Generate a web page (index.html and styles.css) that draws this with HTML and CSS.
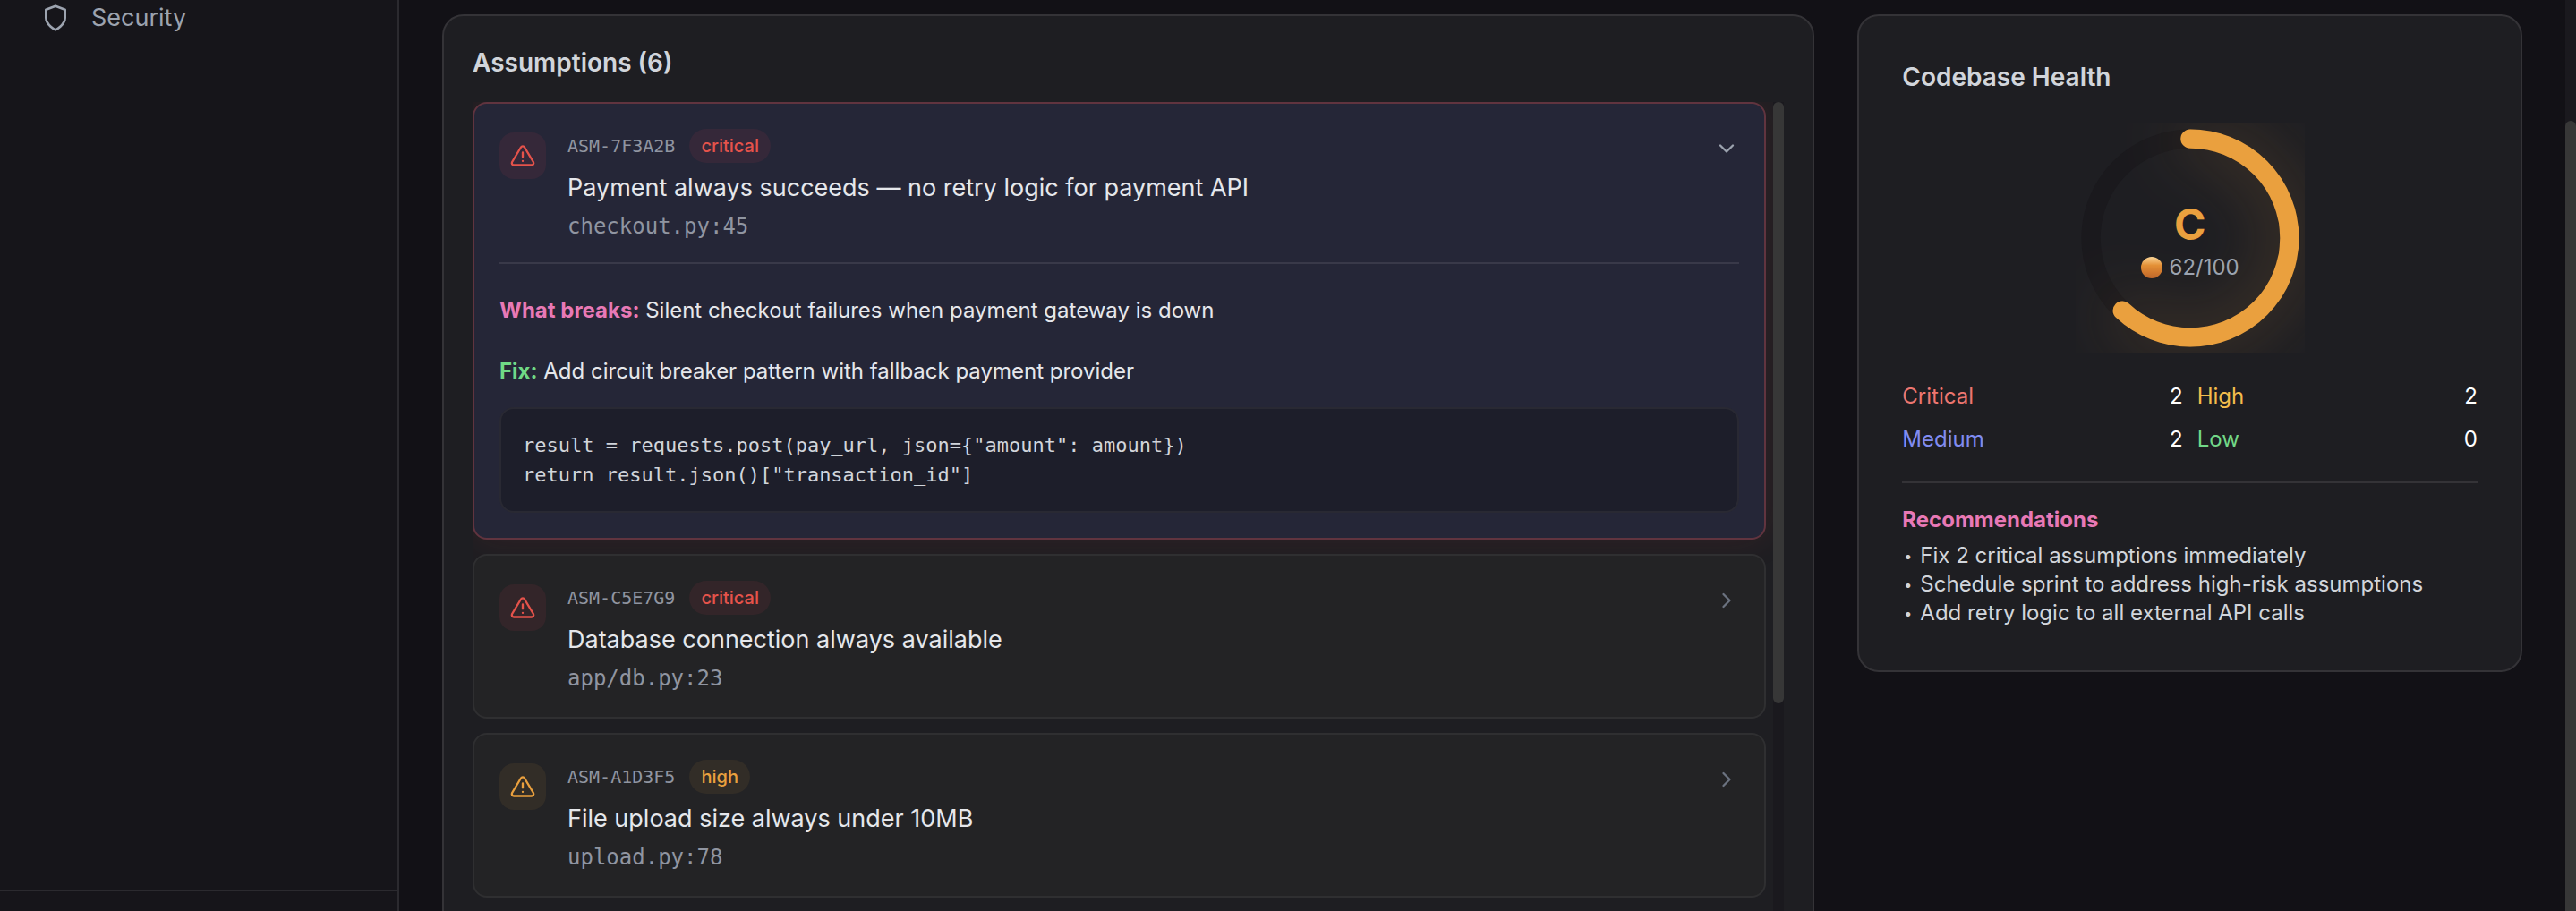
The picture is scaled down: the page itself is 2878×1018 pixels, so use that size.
FILE: index.html
```
<!DOCTYPE html>
<html lang="en">
<head>
<meta charset="utf-8">
<title>Assumptions</title>
<link rel="stylesheet" href="styles.css">
</head>
<body>
<svg class="sprite" aria-hidden="true">
  <symbol id="i-alert" viewBox="0 0 24 24"><path d="M10.29 3.86 1.82 18a2 2 0 0 0 1.71 3h16.94a2 2 0 0 0 1.71-3L13.71 3.86a2 2 0 0 0-3.42 0z"/><path d="M12 9v4M12 17h.01"/></symbol>
  <symbol id="i-right" viewBox="0 0 24 24"><path d="m9 18 6-6-6-6"/></symbol>
  <symbol id="i-down" viewBox="0 0 24 24"><path d="m6 9 6 6 6-6"/></symbol>
  <symbol id="i-shield" viewBox="0 0 24 24"><path d="M12 22s8-4 8-10V5l-8-3-8 3v7c0 6 8 10 8 10z"/></symbol>
</svg>
<div class="app">
  <aside class="sidebar">
    <nav class="nav">
      <a class="nav-link" href="#security"><svg class="nav-icon"><use href="#i-shield"/></svg>Security</a>
    </nav>
    <div class="sidebar-footer"></div>
  </aside>

  <main class="content">
    <section class="panel">
      <h2 class="panel-title">Assumptions (6)</h2>
      <div class="scroller">
        <div class="list">
          <article class="item item-open">
            <button class="item-head" type="button" aria-expanded="true">
              <span class="tile critical"><svg class="tile-icon"><use href="#i-alert"/></svg></span>
              <span class="item-text">
                <span class="meta"><span class="id">ASM-7F3A2B</span><span class="badge critical">critical</span></span>
                <span class="item-title">Payment always succeeds — no retry logic for payment API</span>
                <span class="file">checkout.py:45</span>
              </span>
              <svg class="chevron chevron-open"><use href="#i-down"/></svg>
            </button>
            <div class="details">
              <p class="note"><strong class="pink">What breaks:</strong> Silent checkout failures when payment gateway is down</p>
              <p class="note"><strong class="green">Fix:</strong> Add circuit breaker pattern with fallback payment provider</p>
              <pre class="code"><code>result = requests.post(pay_url, json={"amount": amount})
return result.json()["transaction_id"]</code></pre>
            </div>
          </article>

          <article class="item">
            <button class="item-head" type="button" aria-expanded="false">
              <span class="tile critical"><svg class="tile-icon"><use href="#i-alert"/></svg></span>
              <span class="item-text">
                <span class="meta"><span class="id">ASM-C5E7G9</span><span class="badge critical">critical</span></span>
                <span class="item-title">Database connection always available</span>
                <span class="file">app/db.py:23</span>
              </span>
              <svg class="chevron"><use href="#i-right"/></svg>
            </button>
          </article>

          <article class="item">
            <button class="item-head" type="button" aria-expanded="false">
              <span class="tile high"><svg class="tile-icon"><use href="#i-alert"/></svg></span>
              <span class="item-text">
                <span class="meta"><span class="id">ASM-A1D3F5</span><span class="badge high">high</span></span>
                <span class="item-title">File upload size always under 10MB</span>
                <span class="file">upload.py:78</span>
              </span>
              <svg class="chevron"><use href="#i-right"/></svg>
            </button>
          </article>
        </div>
        <div class="track"><div class="thumb"></div></div>
      </div>
    </section>

    <section class="health">
      <h2 class="panel-title">Codebase Health</h2>
      <div class="gauge">
        <svg class="gauge-ring" viewBox="0 0 120 120">
          <circle class="ring-base" cx="60" cy="60" r="52"/>
          <circle class="ring-value" cx="60" cy="60" r="52" pathLength="100" stroke-dasharray="62 100" transform="rotate(-90 60 60)"/>
        </svg>
        <div class="gauge-label">
          <span class="grade">C</span>
          <span class="score"><span class="dot"></span>62/100</span>
        </div>
      </div>
      <dl class="stats">
        <div class="stat"><dt class="s-critical">Critical</dt><dd>2</dd></div>
        <div class="stat"><dt class="s-high">High</dt><dd>2</dd></div>
        <div class="stat"><dt class="s-medium">Medium</dt><dd>2</dd></div>
        <div class="stat"><dt class="s-low">Low</dt><dd>0</dd></div>
      </dl>
      <div class="recs">
        <h3 class="recs-title">Recommendations</h3>
        <ul class="recs-list">
          <li>Fix 2 critical assumptions immediately</li>
          <li>Schedule sprint to address high-risk assumptions</li>
          <li>Add retry logic to all external API calls</li>
        </ul>
      </div>
    </section>
  </main>
  <div class="track page-track"><div class="thumb"></div></div>
</div>
</body>
</html>
```
FILE: styles.css
```
* { box-sizing: border-box; }

body {
  margin: 0;
  background: #121116;
  color: #e5e7eb;
  font: 24px/32px Inter, "Liberation Sans", sans-serif;
}

h2, h3, p, pre, dl, dd, ul { margin: 0; padding: 0; }
ul { list-style: none; }

svg { fill: none; stroke: currentColor; stroke-width: 2; stroke-linecap: round; stroke-linejoin: round; }
.sprite { display: none; }

.app { display: flex; height: 100vh; overflow: hidden; }

/* Sidebar */
.sidebar {
  display: flex;
  flex-direction: column;
  flex: 0 0 446px;
  background: #16151a;
  border-right: 2px solid #2b2a2f;
}
.nav { flex: 1; padding-left: 46px; }
.nav-link {
  display: flex;
  align-items: center;
  gap: 24px;
  height: 40px;
  color: #9ca3af;
  font-size: 27px;
  text-decoration: none;
}
.nav-icon { width: 32px; height: 32px; }
.sidebar-footer { height: 24px; border-top: 2px solid #2b2a2f; }

/* Main area */
.content {
  flex: 1;
  display: grid;
  grid-template-columns: repeat(3, 1fr);
  gap: 48px;
  align-items: start;
  padding: 16px 48px;
}
.panel, .health {
  background: #1e1e22;
  border: 2px solid #343337;
  border-radius: 24px;
}
.panel { grid-column: span 2; padding: 32px; }
.health { padding: 48px; }
.panel-title { font-size: 28px; line-height: 40px; font-weight: 600; color: #d1d5db; }
.panel .panel-title { margin-bottom: 24px; }
.health .panel-title { margin-bottom: 32px; }

.scroller { display: flex; height: 1200px; }
.list {
  flex: 1;
  display: flex;
  flex-direction: column;
  gap: 16px;
  padding-right: 8px;
  overflow: hidden;
}
.track { width: 12px; background: #1a191e; }
.thumb { height: 56%; background: #373737; border-radius: 6px; }
.page-track { padding-top: 135px; }
.page-track .thumb { height: 100%; border-radius: 6px 6px 0 0; }

/* Assumption cards */
.item {
  padding: 28px;
  background: rgba(37, 37, 38, .85);
  border: 2px solid #2f2f31;
  border-radius: 16px;
}
.item-open {
  background: #252637;
  border-color: #61343f;
  box-shadow: 0 0 40px rgba(239, 68, 68, .1);
}
.item-head {
  display: flex;
  align-items: flex-start;
  gap: 24px;
  width: 100%;
  padding: 0;
  background: none;
  border: 0;
  color: inherit;
  font: inherit;
  text-align: left;
}
.tile {
  display: flex;
  align-items: center;
  justify-content: center;
  width: 52px;
  height: 52px;
  margin-top: 4px;
  border-radius: 16px;
}
.tile-icon { width: 28px; height: 28px; }
.critical { color: #e5534b; background: rgba(239, 68, 88, .08); }
.high { color: #eaa03e; background: rgba(234, 160, 62, .08); }
.item-text { flex: 1; display: flex; flex-direction: column; }
.meta { display: flex; align-items: center; gap: 16px; margin-bottom: 8px; }
.id, .file, .code { font-family: "DejaVu Sans Mono", "Liberation Mono", monospace; }
.id { font-size: 20px; color: #9095a1; }
.badge {
  height: 38px;
  padding: 0 13px;
  border-radius: 19px;
  font-size: 20px;
  line-height: 38px;
  font-weight: 500;
}
.item-title { font-size: 27px; line-height: 40px; margin-bottom: 8px; }
.file { line-height: 30px; color: #9095a1; }
.chevron { width: 28px; height: 28px; margin-top: 8px; color: #6b7280; }
.chevron-open { color: #9ca3af; }

.details {
  display: flex;
  flex-direction: column;
  margin-top: 25px;
  padding-top: 32px;
  border-top: 2px solid #393949;
}
.note { line-height: 40px; margin-bottom: 28px; }
.note:nth-of-type(2) { margin-bottom: 20px; }
.note strong { font-weight: 700; }
.pink { color: #e879b6; }
.green { color: #6fd986; }
.code {
  padding: 24px;
  background: #1d1e2a;
  border: 2px solid #292933;
  border-radius: 16px;
  color: #d1d5db;
  font-size: 22px;
  line-height: 33px;
}
.code code { font: inherit; }

/* Health card */
.gauge { display: grid; justify-items: center; margin-bottom: 33px; }
.gauge-ring, .gauge-label { grid-area: 1 / 1; }
.gauge-ring { width: 256px; height: 256px; overflow: hidden; stroke-width: 10; }
.ring-base { stroke: #1a191d; }
.ring-value { stroke: #eaa03e; filter: drop-shadow(0 0 16px rgba(234, 160, 62, .3)); }
.gauge-label { display: flex; flex-direction: column; align-items: center; align-self: center; padding-top: 2px; }
.grade { color: #eaa03e; font-size: 48px; line-height: 64px; font-weight: 700; }
.score { display: flex; align-items: center; gap: 8px; color: #9ca3af; }
.dot {
  width: 24px;
  height: 24px;
  border-radius: 50%;
  background: linear-gradient(#fbd596, #e39036 40%, #d27a2e 70%, #bd662b);
}

.stats { display: grid; grid-template-columns: 1fr 1fr; gap: 16px; margin-bottom: 31px; }
.stat { display: flex; justify-content: space-between; color: #fff; }
.s-critical { color: #ec7670; }
.s-high { color: #f3bc4c; }
.s-medium { color: #818cf0; }
.s-low { color: #72d888; }

.recs { padding-top: 25px; border-top: 2px solid #343337; }
.recs-title { margin-bottom: 8px; color: #e879b6; font-size: 24px; font-weight: 700; }
.recs-list { color: #d1d5db; }
.recs-list li { display: flex; }
.recs-list li::before { content: "•"; width: 18px; padding-left: 2px; font-size: 16px; }
```
